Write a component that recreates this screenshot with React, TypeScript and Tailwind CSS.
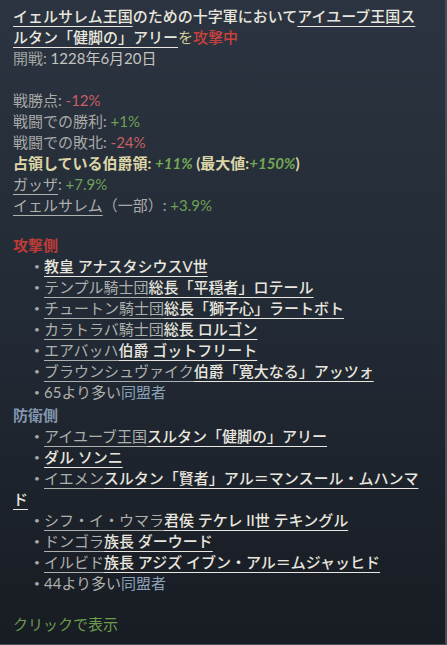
const FONT = "font-['Lato','Noto_Sans_CJK_JP',sans-serif]";

// underlined name parts: dim prefix + bright title/name
function Name({ dim, main }: { dim?: string; main?: string }) {
  return (
    <>
      {dim && <span className="text-[#aeb0ad] underline decoration-1 underline-offset-[4px]">{dim}</span>}
      {main && <span className="text-[#e8e6de] font-medium underline decoration-1 underline-offset-[4px]">{main}</span>}
    </>
  );
}

function Item({ children }: { children: React.ReactNode }) {
  return (
    <div>
      <span className="pl-[17px]" />
      <span className="relative -top-[2px] inline-block w-[14px] text-center text-[#a8aaa8] text-[10px] leading-[10px]">•</span>
      {children}
    </div>
  );
}

export default function App() {
  const attackers = [
    { main: "教皇 アナスタシウスV世" },
    { dim: "テンプル騎士団", main: "総長「平穏者」ロテール" },
    { dim: "チュートン騎士団", main: "総長「獅子心」ラートボト" },
    { dim: "カラトラバ騎士団", main: "総長 ロルゴン" },
    { dim: "エアバッハ", main: "伯爵 ゴットフリート" },
    { dim: "ブラウンシュヴァイク", main: "伯爵「寛大なる」アッツォ" },
  ];
  const defenders = [
    { dim: "アイユーブ王国", main: "スルタン「健脚の」アリー" },
    { main: "ダル ソンニ" },
    { dim: "イエメン", main: "スルタン「賢者」アル＝マンスール・ムハンマド" },
    { dim: "シフ・イ・ウマラ", main: "君侯 テケレ II世 テキングル" },
    { dim: "ドンゴラ", main: "族長 ダーウード" },
    { dim: "イルビド", main: "族長 アジズ イブン・アル＝ムジャッヒド" },
  ];

  return (
    <div
      className={`${FONT} h-[645px] w-[447px] overflow-hidden bg-gradient-to-b from-[#2b3440] via-[#222a35] to-[#181c23] border-r-2 border-b border-[#464c54] pl-[13px] pr-[20px] pt-[6px] text-[15px] leading-[21px] text-[#e8e6de]`}
    >
      <div>
        <Name main="イェルサレム王国" />
        <span className="font-medium">のための十字軍において</span>
        <Name main="アイユーブ王国スルタン「健脚の」アリー" />
        <span className="text-[#d6cf9a]">を</span>
        <span className="text-[#c8423d] font-medium">攻撃中</span>
      </div>
      <div>
        <span className="text-[#a4a6a4]">開戦: </span>
        <span className="text-[#c4c4c0]">1228年6月20日</span>
      </div>
      <div className="h-[21px]" />

      <div className="text-[#a9aaa8]">
        戦勝点: <span className="text-[#c95f62]">-12%</span>
      </div>
      <div className="text-[#a9aaa8]">
        戦闘での勝利: <span className="text-[#6fa057]">+1%</span>
      </div>
      <div className="text-[#a9aaa8]">
        戦闘での敗北: <span className="text-[#c95f62]">-24%</span>
      </div>
      <div className="text-[#ddd6a6] font-bold">
        占領している伯爵領: <span className="text-[#74a653] italic">+11%</span> (最大値:
        <span className="text-[#74a653] italic">+150%</span>)
      </div>
      <div className="text-[#a9aaa8]">
        <Name dim="ガッザ" />: <span className="text-[#6fa057]">+7.9%</span>
      </div>
      <div className="text-[#a9aaa8]">
        <Name dim="イェルサレム" />（一部）: <span className="text-[#6fa057]">+3.9%</span>
      </div>
      <div className="h-[19px]" />

      <div className="text-[#bd3b37] font-semibold">攻撃側</div>
      {attackers.map((a) => (
        <Item key={a.main}>
          <Name dim={a.dim} main={a.main} />
        </Item>
      ))}
      <Item>
        <span className="text-[#aeb0ad]">65より多い</span>
        <span className="text-[#8aa0b6]">同盟者</span>
      </Item>

      <div className="mt-[2px] text-[#8297ae] font-semibold">防衛側</div>
      {defenders.map((d) => (
        <Item key={d.main}>
          <Name dim={d.dim} main={d.main} />
        </Item>
      ))}
      <Item>
        <span className="text-[#aeb0ad]">44より多い</span>
        <span className="text-[#8aa0b6]">同盟者</span>
      </Item>
      <div className="h-[20px]" />

      <div className="text-[#6d9c4e]">クリックで表示</div>
    </div>
  );
}
